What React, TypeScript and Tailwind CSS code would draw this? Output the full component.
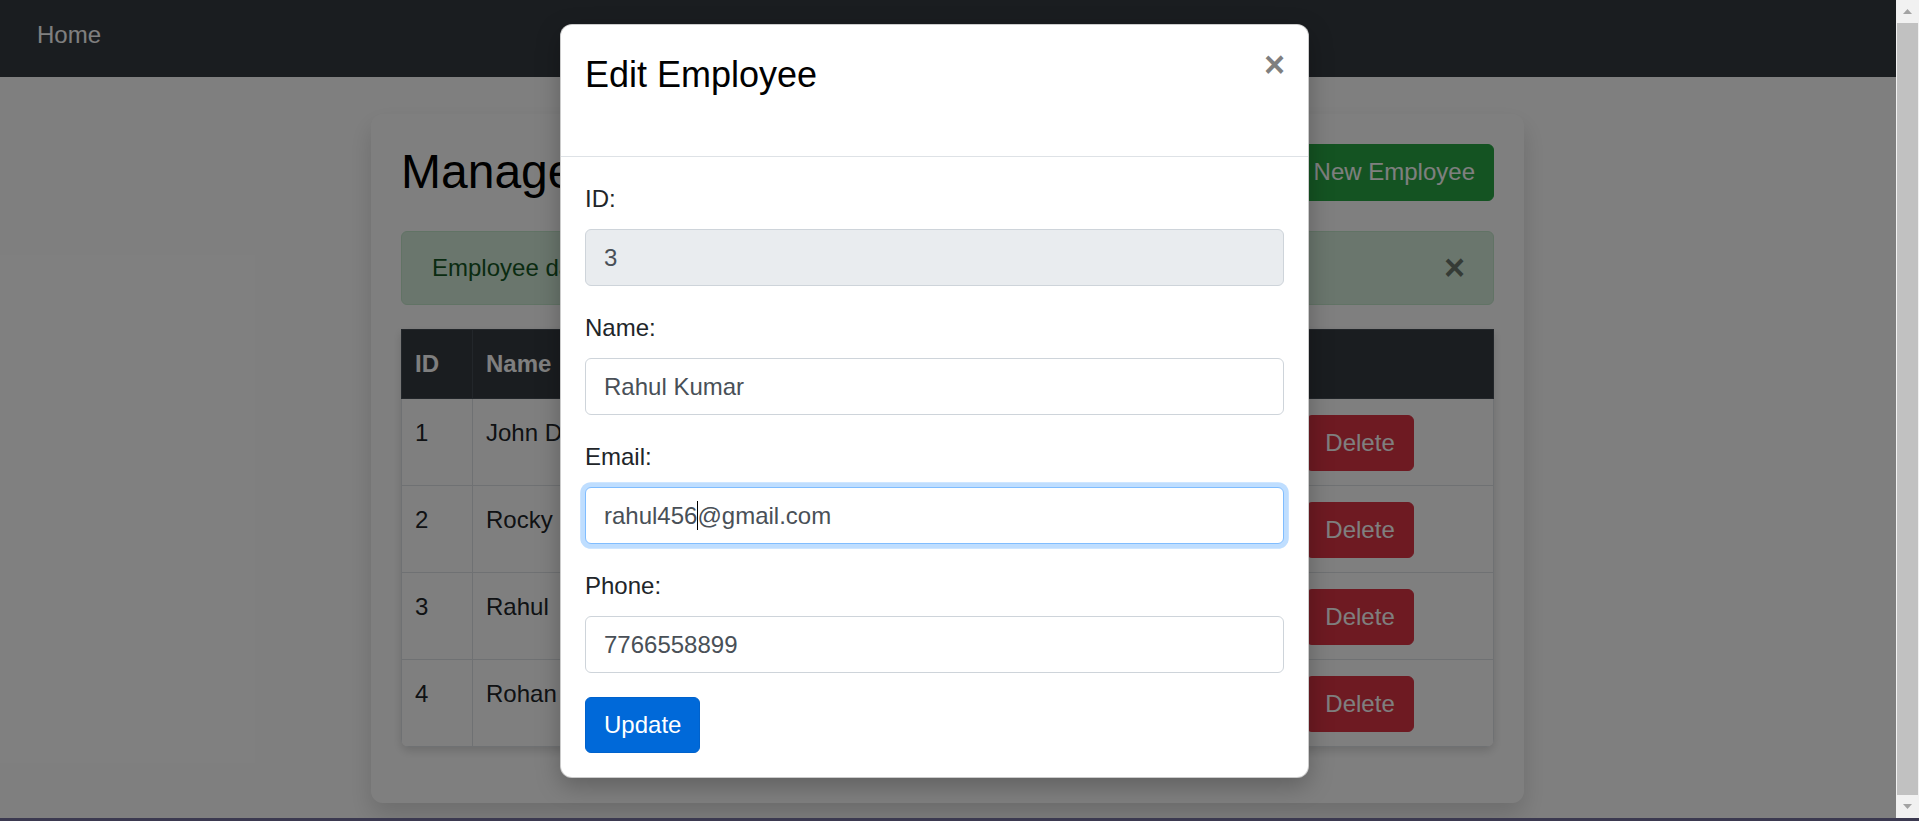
import React from "react";

const rows = [
  { id: 1, name: "John Doe", email: "john@gmail.com", phone: "9876543210" },
  { id: 2, name: "Rocky", email: "rocky@gmail.com", phone: "9988776655" },
  { id: 3, name: "Rahul", email: "rahul@gmail.com", phone: "7766558899" },
  { id: 4, name: "Rohan", email: "rohan@gmail.com", phone: "8899776655" },
];

function Field({
  label,
  value,
  readOnly,
  focused,
  caretAfter,
}: {
  label: string;
  value: string;
  readOnly?: boolean;
  focused?: boolean;
  caretAfter?: number;
}) {
  const base =
    "h-[57px] w-full rounded-[6px] border px-[18px] flex items-center text-[24px] leading-[36px] text-[#495057]";
  const cls = readOnly
    ? `${base} bg-[#e9ecef] border-[#ced4da]`
    : focused
    ? `${base} bg-white border-[#80bdff] shadow-[0_0_0_4.8px_rgba(0,123,255,0.25)]`
    : `${base} bg-white border-[#ced4da]`;
  return (
    <div className="mb-[24px]">
      <div className="mb-[12px] text-[24px] leading-[36px] text-[#212529]">{label}</div>
      <div className={cls}>
        {caretAfter !== undefined ? (
          <span className="whitespace-pre">
            {value.slice(0, caretAfter)}
            <span className="relative top-[-2px] -mr-px inline-block h-[29px] w-px bg-black align-middle" />
            {value.slice(caretAfter)}
          </span>
        ) : (
          <span className="whitespace-pre">{value}</span>
        )}
      </div>
    </div>
  );
}

export default function App() {
  return (
    <div className="flex h-[821px] w-[1919px] flex-col overflow-hidden font-['Liberation_Sans',Arial,sans-serif]">
      <div className="flex min-h-0 flex-1">
        <div className="relative flex-1 overflow-hidden bg-white">
          <nav className="h-[77px] bg-[#343a40] px-[37px] pt-[17px]">
            <span className="text-[24px] leading-[36px] text-white">Home</span>
          </nav>

          <div className="ml-[371px] mt-[37px] w-[1153px] rounded-[12px] bg-white px-[30px] pb-[56px] pt-[29px] shadow-[0_12px_24px_rgba(0,0,0,0.15)]">
            <div className="flex h-[58px] items-center justify-between">
              <h2 className="text-[48px] leading-[58px] text-black">Manage Employees</h2>
              <button className="h-[57px] rounded-[6px] border border-[#28a745] bg-[#28a745] px-[18px] text-[24px] leading-[36px] text-white">
                Add New Employee
              </button>
            </div>

            <div className="mt-[30px] flex h-[74px] items-center justify-between rounded-[6px] border border-[#c3e6cb] bg-[#d4edda] pl-[30px] pr-[28px] text-[24px] leading-[36px] text-[#155724]">
              <span>Employee data updated successfully!</span>
              <span className="text-[36px] font-bold leading-[36px] text-black/50">×</span>
            </div>

            <div className="mt-[24px] overflow-hidden rounded-b-[8px] shadow-[0_4px_10px_rgba(0,0,0,0.15)]">
              <table className="w-full table-fixed border-collapse text-[24px] leading-[36px] text-[#212529]">
                <colgroup>
                  <col className="w-[71px]" />
                  <col className="w-[220px]" />
                  <col className="w-[307px]" />
                  <col className="w-[200px]" />
                  <col />
                </colgroup>
                <thead>
                  <tr className="h-[69px] bg-[#343a40] text-white">
                    <th className="border border-[#454d55] px-[13px] text-left font-bold">ID</th>
                    <th className="border border-[#454d55] px-[13px] text-left font-bold">Name</th>
                    <th className="border border-[#454d55] px-[13px] text-left font-bold">Email</th>
                    <th className="border border-[#454d55] px-[13px] text-left font-bold">Phone</th>
                    <th className="border border-[#454d55] px-[13px] text-left font-bold">Actions</th>
                  </tr>
                </thead>
                <tbody>
                  {rows.map((r) => (
                    <tr key={r.id} className="h-[87px]">
                      <td className="border border-[#dee2e6] px-[13px] pt-[16px] align-top">{r.id}</td>
                      <td className="border border-[#dee2e6] px-[13px] pt-[16px] align-top">{r.name}</td>
                      <td className="border border-[#dee2e6] px-[13px] pt-[16px] align-top">{r.email}</td>
                      <td className="border border-[#dee2e6] px-[13px] pt-[16px] align-top">{r.phone}</td>
                      <td className="border border-[#dee2e6] pl-[15px] pr-[18px] pt-[16px] align-top">
                        <div className="flex gap-[12px]">
                          <button className="h-[56px] rounded-[6px] border border-[#ffc107] bg-[#ffc107] px-[18px] text-[24px] leading-[36px] text-[#212529]">
                            Edit
                          </button>
                          <button className="h-[56px] rounded-[6px] border border-[#dc3545] bg-[#dc3545] px-[18px] text-[24px] leading-[36px] text-white">
                            Delete
                          </button>
                        </div>
                      </td>
                    </tr>
                  ))}
                </tbody>
              </table>
            </div>
          </div>

          <div className="absolute inset-0 bg-black/50" />

          <div className="absolute left-[560px] top-[24px] w-[749px] rounded-[12px] border border-black/20 bg-white shadow-[0_8px_24px_rgba(0,0,0,0.25)]">
            <div className="relative h-[132px] border-b border-[#dee2e6] px-[24px] pt-[23px]">
              <h4 className="text-[36px] leading-[54px] text-black">Edit Employee</h4>
              <span className="absolute right-[23px] top-[22px] text-[36px] font-bold leading-[36px] text-black/50">
                ×
              </span>
            </div>
            <div className="p-[24px]">
              <Field label="ID:" value="3" readOnly />
              <Field label="Name:" value="Rahul Kumar" />
              <Field label="Email:" value="rahul456@gmail.com" focused caretAfter={8} />
              <Field label="Phone:" value="7766558899" />
              <button className="h-[56px] rounded-[6px] border border-[#0062cc] bg-[#0069d9] px-[18px] text-[24px] leading-[36px] text-white">
                Update
              </button>
            </div>
          </div>
        </div>

        <div className="flex w-[23px] flex-col bg-[#f1f1f1]">
          <div className="flex h-[23px] items-center justify-center">
            <svg width="9" height="5" viewBox="0 0 9 5">
              <polygon points="0,5 9,5 4.5,0" fill="#a3a3a3" />
            </svg>
          </div>
          <div className="mx-[1px] flex-1 bg-[#c1c1c1]" />
          <div className="flex h-[23px] items-center justify-center">
            <svg width="9" height="5" viewBox="0 0 9 5">
              <polygon points="0,0 9,0 4.5,5" fill="#a3a3a3" />
            </svg>
          </div>
        </div>
      </div>
      <div className="h-[3px] bg-[#3b3950]" />
    </div>
  );
}
